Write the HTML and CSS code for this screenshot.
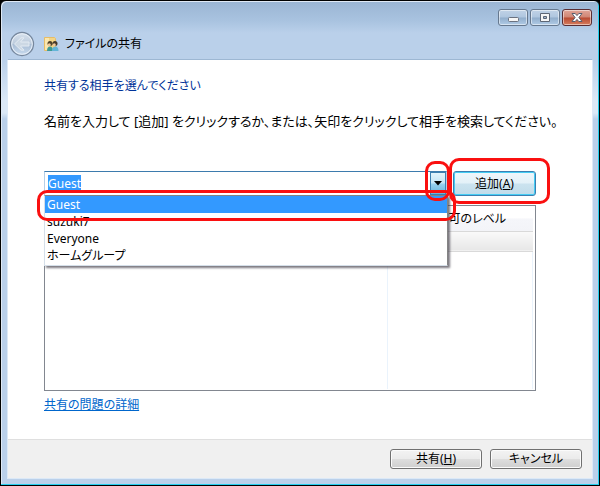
FILE: index.html
```html
<!DOCTYPE html>
<html lang="ja">
<head>
<meta charset="utf-8">
<meta name="viewport" content="width=device-width, initial-scale=1">
<title>ファイルの共有</title>
<link rel="stylesheet" href="styles.css">
</head>
<body>
<div class="window">
  <header class="titlebar">
    <div class="window-controls">
      <button type="button" class="control" aria-label="最小化">
        <svg width="14" height="12" viewBox="0 0 14 12"><rect x="2.500" y="5.500" width="10" height="4" rx="1" fill="#f6f6f6" stroke="#6b7280"/></svg>
      </button>
      <button type="button" class="control" aria-label="最大化">
        <svg width="14" height="12" viewBox="0 0 14 12"><path d="M2.500 1.500h9v8h-9z" fill="#f6f6f6" stroke="#5d6675"/><path d="M5.500 4.500h3v2h-3z" fill="#9fb5d0" stroke="#5d6675"/></svg>
      </button>
      <button type="button" class="control control-close" aria-label="閉じる">
        <svg width="14" height="12" viewBox="0 0 14 12"><path d="M2 1.500h3.200L7 3.600l1.800-2.100H12L8.900 5.500 12 9.500H8.800L7 7.400 5.200 9.500H2l3.100-4z" fill="#fff" stroke="#5a5f6e"/></svg>
      </button>
    </div>
    <div class="nav">
      <button type="button" class="back" aria-label="戻る">
        <svg width="26" height="26" viewBox="0 0 26 26">
          <defs><linearGradient id="orb" x1="0" y1="0" x2="0" y2="1"><stop offset="0" stop-color="#d9e3ee"/><stop offset=".48" stop-color="#bccbdc"/><stop offset=".52" stop-color="#a9bdd4"/><stop offset="1" stop-color="#c9dcf0"/></linearGradient></defs>
          <circle cx="13" cy="13" r="11.500" fill="url(#orb)" stroke="#76879d" stroke-width="1.300"/>
          <circle cx="13" cy="13" r="10.300" fill="none" stroke="#e9f0f8"/>
          <path d="M5.500 13l6.500-6.200h3L11.500 11H20v4h-8.500l3.500 4.200h-3z" fill="#ccd8e4" stroke="#e3ebf3" stroke-linejoin="round"/>
        </svg>
      </button>
      <svg class="folder" width="16" height="16" viewBox="0 0 16 16">
        <path d="M1.500 1.500h10l1 1v12h-11z" fill="#f3d587" stroke="#e6bd68"/>
        <path d="M2 2h4v12H2z" fill="#fbe7ae"/>
        <path d="M4 15c0-3 1-4.500 3-4.500S10 12 10 15z" fill="#3f9a94"/>
        <path d="M9 15c0-3 1-4.500 3.200-4.500s3.300 1.500 3.300 4.500z" fill="#62b5d8"/>
        <circle cx="7" cy="7.500" r="2.500" fill="#4f4328"/><circle cx="6.300" cy="8.800" r="1.500" fill="#f0c79a"/>
        <circle cx="12" cy="7.500" r="2.500" fill="#453a2a"/><circle cx="11.300" cy="8.800" r="1.500" fill="#f0c79a"/>
      </svg>
      <h1 class="caption">ファイルの共有</h1>
    </div>
  </header>

  <form class="dialog">
    <main class="content">
      <h2 class="heading">共有する相手を選んでください</h2>
      <label class="instruction" for="person">名前を入力して [追加] をクリックするか、または、矢印をクリックして相手を検索してください。</label>

      <div class="picker">
        <div class="combo">
          <input class="combo-input" id="person" type="text" value="Guest" role="combobox" aria-expanded="true" aria-controls="people" autocomplete="off">
          <button type="button" class="combo-arrow" aria-label="一覧を開く">
            <svg width="8" height="5" viewBox="0 0 8 5"><path d="M0 0h8L4 4.500z" fill="#000"/></svg>
            <span class="mark mark-arrow"></span>
          </button>
          <ul class="people" id="people" role="listbox">
            <li class="person selected" role="option" aria-selected="true">Guest<span class="mark mark-person"></span></li>
            <li class="person" role="option">suzuki7</li>
            <li class="person" role="option">Everyone</li>
            <li class="person" role="option">ホームグループ</li>
          </ul>
        </div>
        <button type="button" class="button add">追加(<u>A</u>)<span class="mark mark-add"></span></button>
      </div>

      <div class="list">
        <table class="shares">
          <thead><tr><th class="name" scope="col"></th><th scope="col">アクセス許可のレベル</th></tr></thead>
          <tbody>
            <tr class="row"><td></td><td></td></tr>
            <tr><td></td><td></td></tr>
          </tbody>
        </table>
      </div>

      <a class="help" href="#help">共有の問題の詳細</a>
    </main>
    <footer class="actions">
      <button type="submit" class="button">共有(<u>H</u>)</button>
      <button type="button" class="button">キャンセル</button>
    </footer>
  </form>
</div>
<script src="script.js"></script>
</body>
</html>
```
FILE: styles.css
```css
* { box-sizing: border-box; }

body {
  margin: 0;
  background: #000;
  color: #000;
  font: 12px/18px "Noto Sans", "Noto Sans CJK JP", sans-serif;
  font-feature-settings: "palt";
}

button, input { font: inherit; font-feature-settings: inherit; color: inherit; }
h1, h2 { margin: 0; font-size: 12px; font-weight: 400; }
svg { display: block; }

.window {
  display: flex;
  flex-direction: column;
  min-height: 100vh;
  padding: 0 6px 6px;
  border: 1px solid #000;
  border-radius: 6px 6px 0 0;
  background: linear-gradient(#9ab5d3, #a9c3e0 20px, #bad0ea 32px, #bad0ea 60px, #dbe8f6 100px, #dbe8f6 112px, #bad0ea 118px);
  box-shadow: inset -1px -1px #25cfee, inset 1px 1px #dfe9f5;
}

.titlebar { display: flex; flex-direction: column; height: 58px; }
.window-controls { display: flex; justify-content: flex-end; gap: 2px; padding: 8px 1px 0 0; }

.control {
  display: flex;
  align-items: center;
  justify-content: center;
  width: 30px;
  height: 17px;
  padding: 0;
  border: 1px solid #66788e;
  border-radius: 3px;
  background: linear-gradient(#c0d2e6, #afc6df 48%, #91adcb 52%, #b0cbe6);
  box-shadow: inset 0 0 0 1px rgba(255, 255, 255, .5);
}

.control-close {
  border-color: #5a2d33;
  background: linear-gradient(#e0a598, #d08573 48%, #b84a32 52%, #d67d5e);
}

.nav { display: flex; align-items: center; gap: 8px; margin-top: 5px; padding-left: 2px; }
.back { padding: 0; border: 0; background: none; }
.caption { margin-left: -2px; }

.dialog {
  display: flex;
  flex: 1;
  flex-direction: column;
  border: 1px solid #dce9f7;
  border-top-color: #9db7d3;
  background: #fff;
}

.content {
  display: flex;
  flex: 1;
  flex-direction: column;
  padding: 17px 36px 0;
}

.heading { color: #003399; }
.instruction { margin-top: 17px; font-size: 13px; white-space: nowrap; }
.picker { display: flex; align-items: flex-end; gap: 6px; margin: 41px 20px 0 0; }

.combo {
  position: relative;
  display: flex;
  flex: 1;
  height: 25px;
  border: 1px solid #b5cfe7;
  border-top-color: #3d7bad;
}

.combo-input {
  flex: 1;
  min-width: 0;
  padding: 0 3px;
  border: 0;
  outline: 0;
  background: #fff;
}

.combo-input::selection { background: #3399ff; color: #fff; }

.combo-arrow {
  position: relative;
  display: flex;
  align-items: center;
  justify-content: center;
  width: 16px;
  padding: 0;
  border: 1px solid #3c7fb1;
  background: linear-gradient(#e3f4fc, #c4e5f6 48%, #98d1ef 52%, #68b3db);
}

.people {
  position: absolute;
  z-index: 1;
  top: 23px;
  left: -1px;
  right: -2px;
  margin: 0;
  padding: 0 0 1px;
  border: 1px solid #d5dfe9;
  border-top-color: #848484;
  border-right-color: #848484;
  background: #fff;
  box-shadow: 2px 2px 2px rgba(70, 65, 75, .7);
  list-style: none;
  line-height: 17px;
}

.person { position: relative; padding-left: 2px; }
.selected { background: #3399ff; color: #fff; }

.button {
  width: 92px;
  height: 20px;
  padding: 0;
  border: 1px solid #707070;
  border-radius: 3px;
  background: linear-gradient(#f3f3f3, #ebebeb 48%, #dddddd 52%, #cfcfcf);
  box-shadow: inset 0 0 0 1px #fbfbfb;
  line-height: 18px;
}

.add {
  position: relative;
  width: 83px;
  height: 25px;
  border-color: #3c7fb1;
  background: linear-gradient(#f0f7fb, #e3f1f8 48%, #cbe3ef 52%, #c0dcea);
  box-shadow: inset 0 0 0 1px #45cdf4;
}

/* Red outlines that point out the steps to follow */
.mark {
  position: absolute;
  z-index: 2;
  border: 3px solid #fa1010;
  border-radius: 10px;
  pointer-events: none;
}

.mark-arrow { inset: -12px -5px -7px -6px; }
.mark-person { inset: -6px -9px -8px -8px; }
.mark-add { inset: -14px -15px -9px -5px; }

.list {
  display: flex;
  flex: 1;
  margin: 9px 20px 0 0;
  padding: 1px 2px;
  border: 1px solid #828790;
}

.shares { flex: 1; border-collapse: collapse; table-layout: fixed; }
.shares th { height: 24px; padding: 0 6px; font-weight: 400; text-align: left; background: linear-gradient(#fff, #fff 45%, #f5f6fa 50%, #f3f4f8); }
.shares td { padding: 0; border-right: 1px solid #eaf3fc; }
.shares .name { width: 340px; }
.shares .row td { height: 20px; border: solid #d9d9d9; border-width: 1px 0; background: linear-gradient(#fafafa, #e7e7e7); }

.help { align-self: flex-start; margin: 5px 0 25px; color: #0066cc; }

.actions {
  display: flex;
  justify-content: flex-end;
  gap: 8px;
  padding: 9px 10px;
  border-top: 1px solid #dfdfdf;
  background: #f0f0f0;
}
```
FILE: script.js
```js
const person = document.getElementById("person");
person.focus();
person.select();
```
